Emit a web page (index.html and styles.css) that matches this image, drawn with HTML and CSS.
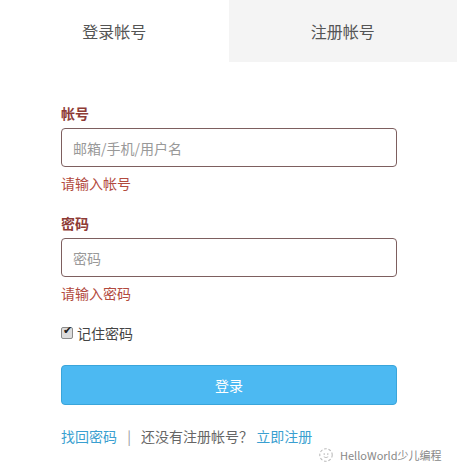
FILE: index.html
```html
<!DOCTYPE html>
<html lang="zh-CN">
<head>
    <meta charset="UTF-8">
    <title>登录</title>
    <link rel="stylesheet" href="styles.css">
</head>
<body>
<div id="box">
    <ul id="tabs">
        <li class="tab-selected">登录帐号</li>
        <li>注册帐号</li>
    </ul>
    <form id="login">
        <label class="field-label" for="user">帐号</label>
        <input class="field" id="user" type="text" placeholder="邮箱/手机/用户名">
        <p class="error">请输入帐号</p>
        <label class="field-label" for="pwd">密码</label>
        <input class="field" id="pwd" type="password" placeholder="密码">
        <p class="error">请输入密码</p>
        <label class="remember"><input type="checkbox" checked> 记住密码</label>
        <button class="submit" type="button">登录</button>
        <p class="links">
            <a href="#">找回密码</a>
            <span class="sep">|</span>
            还没有注册帐号？
            <a href="#">立即注册</a>
        </p>
    </form>
    <div id="mark">
        <svg width="16" height="16" viewBox="0 0 18 18">
            <circle cx="9" cy="9" r="7" fill="none" stroke="#bbb" stroke-width="1.2" stroke-dasharray="3 2"/>
            <circle cx="7" cy="8" r="0.9" fill="#bbb"/>
            <circle cx="11" cy="8" r="0.9" fill="#bbb"/>
            <path d="M6.5 11 Q9 13 11.5 11" fill="none" stroke="#bbb" stroke-width="1"/>
        </svg>
        <span>HelloWorld少儿编程</span>
    </div>
</div>
</body>
</html>
```
FILE: styles.css
```css
* {
    padding: 0;
    margin: 0;
}

body {
    font-family: "Noto Sans CJK SC", "Liberation Sans", sans-serif;
    background: #ffffff;
}

#box {
    position: relative;
    width: 457px;
    height: 470px;
}

#tabs {
    display: flex;
    height: 62px;
}

#tabs li {
    flex: 1;
    list-style: none;
    text-align: center;
    line-height: 62px;
    font-size: 16px;
    color: #555555;
    background: #f4f4f4;
}

#tabs .tab-selected {
    background: #ffffff;
}

#login {
    display: flex;
    flex-direction: column;
    width: 336px;
    padding: 41px 0 0 61px;
}

.field-label {
    font-size: 14px;
    font-weight: bold;
    line-height: 20px;
    color: #8e3b36;
    margin-bottom: 5px;
}

.field {
    height: 39px;
    box-sizing: border-box;
    border: 1px solid #7d5f5f;
    border-radius: 4px;
    padding: 0 11px;
    font-size: 14px;
    font-family: inherit;
    color: #333333;
    outline: none;
}

.field::placeholder {
    color: #999999;
}

.error {
    font-size: 14px;
    line-height: 20px;
    color: #b24a3e;
    margin: 6px 0 20px;
}

.remember {
    display: flex;
    align-items: center;
    gap: 4px;
    font-size: 14px;
    line-height: 20px;
    color: #444444;
}

.remember input {
    appearance: none;
    position: relative;
    width: 12px;
    height: 12px;
    margin: 0;
    border: 1px solid #8a8a8a;
    border-radius: 2px;
    background: #dcdcdc;
}

.remember input:checked::after {
    content: "✔";
    position: absolute;
    left: 1px;
    top: -4px;
    font-size: 11px;
    color: #222222;
}

.submit {
    height: 40px;
    margin-top: 22px;
    border: 1px solid #3aa5da;
    border-radius: 4px;
    background: #4cb9f2;
    color: #ffffff;
    font-size: 14px;
    font-family: inherit;
    cursor: pointer;
}

.links {
    margin-top: 21px;
    font-size: 14px;
    line-height: 20px;
    color: #666666;
}

.links a {
    color: #3a9fd0;
    text-decoration: none;
}

.links .sep {
    color: #999999;
    margin: 0 7px;
}

#mark {
    position: absolute;
    left: 318px;
    top: 447px;
    display: flex;
    align-items: center;
    gap: 6px;
    font-size: 11px;
    color: #888888;
}
```
